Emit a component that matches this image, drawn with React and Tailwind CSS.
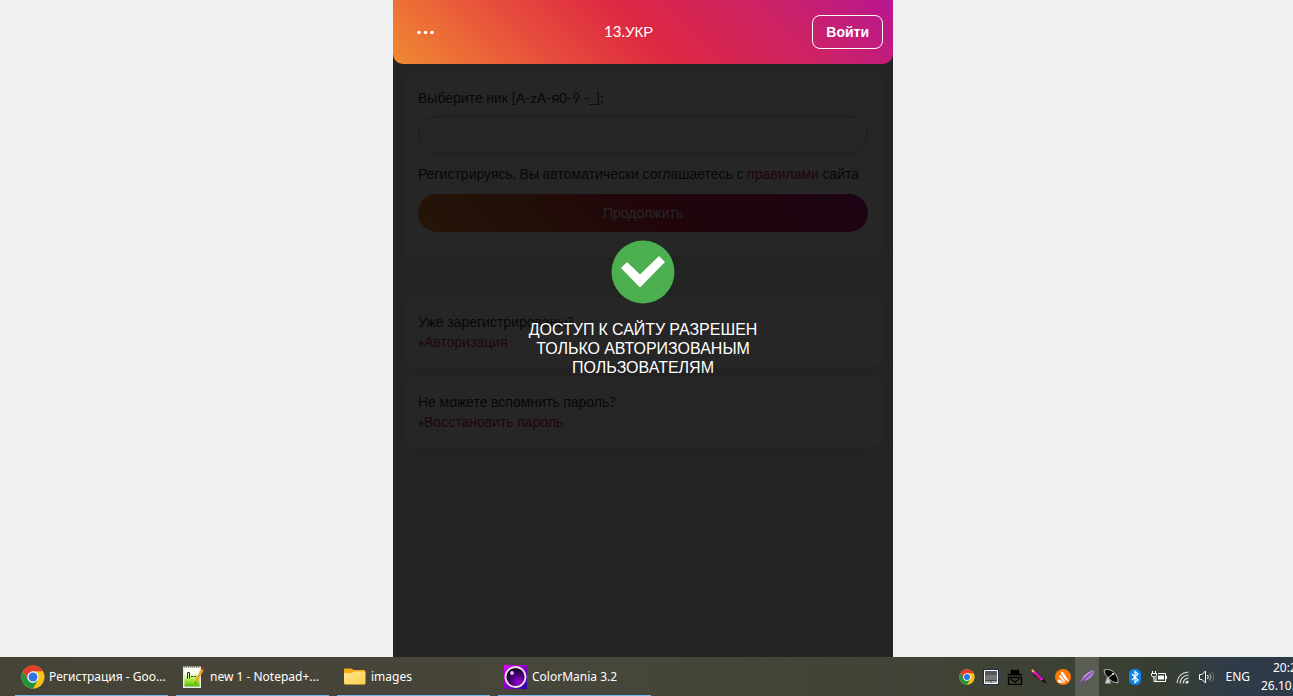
import React from "react";

const HEADER_GRADIENT =
  "bg-[linear-gradient(45deg,#f08a32_0%,#e74c3c_29%,#dc2743_51%,#cc2366_77%,#b81690_100%)]";
const BUTTON_GRADIENT =
  "bg-[linear-gradient(45deg,#f09433_0%,#e6683c_25%,#dc2743_50%,#cc2366_75%,#bc1888_100%)]";
const CARD = "rounded-[10px] bg-white p-[15px] shadow-[0_5px_20px_rgba(0,0,0,0.08)]";

/* Cyrillic words are set in the sans face, everything else keeps the page font. */
function Text({ children }) {
  return children
    .split(/([А-Яа-яЁё]+)/)
    .map((part, i) =>
      i % 2 ? (
        <span key={i} className="[font-family:'Liberation_Sans',sans-serif]">
          {part}
        </span>
      ) : (
        part
      )
    );
}

function ChromeIcon({ className }) {
  return (
    <svg className={className} viewBox="0 0 48 48" aria-hidden="true">
      <circle cx="24" cy="24" r="23" fill="#fbc116" />
      <path d="M24 24 4.1 12.5A23 23 0 0 1 43.9 12.5H24Z" fill="#e33b2e" />
      <path d="M4.1 12.5 14 29.8 24 24V12.5Z" fill="#e33b2e" />
      <path d="M4.1 12.5 14 29.8A11.5 11.5 0 0 0 24 35.5L34 29.8 24 47A23 23 0 0 1 4.1 12.5Z" fill="#229342" />
      <circle cx="24" cy="24" r="11.5" fill="#fff" />
      <circle cx="24" cy="24" r="9" fill="#2f74e8" />
    </svg>
  );
}

function NotepadIcon() {
  return (
    <svg className="h-6 w-6 shrink-0" viewBox="0 0 24 24" aria-hidden="true">
      <defs>
        <linearGradient id="np" x1="0" y1="0" x2="0" y2="1">
          <stop offset="0.3" stopColor="#fafff0" />
          <stop offset="0.65" stopColor="#a9ec36" />
          <stop offset="1" stopColor="#4eb70c" />
        </linearGradient>
      </defs>
      <path d="M1 1.5h18v21.5H1Z" fill="#e8e8e8" />
      <path d="M2.5 3h15v18.5h-15Z" fill="url(#np)" />
      <path d="M2 2h16" stroke="#777" strokeWidth="1.5" strokeDasharray="1 1" />
      <path d="M5.5 13.5v-6h2v6" fill="none" stroke="#26331a" />
      <path d="M9 11.5h2M12 11.5h2" stroke="#26331a" strokeWidth="1.2" />
      <path d="m19 4 2.5 1.2-6 11.3-2.5 2 .3-3.5Z" fill="#f5a623" />
      <path d="m19 4 1.2-2.7 2.3 1-1 2.9Z" fill="#9a3428" />
      <path d="m13 18.5.2-1.600 1.200.5Z" fill="#222" />
    </svg>
  );
}

function FolderIcon() {
  return (
    <svg className="h-6 w-6 shrink-0" viewBox="0 0 24 24" aria-hidden="true">
      <defs>
        <linearGradient id="fd" x1="0" y1="0" x2="1" y2="1">
          <stop offset="0" stopColor="#ffe694" />
          <stop offset="1" stopColor="#ffcf48" />
        </linearGradient>
      </defs>
      <path d="M1 4.5a1 1 0 0 1 1-1h6.5L10.5 5H21a1 1 0 0 1 1 1v6H1Z" fill="#f3ac16" />
      <path d="M1 8h8l2-1.5h11.5V18a1.5 1.5 0 0 1-1.5 1.5H2.5A1.5 1.5 0 0 1 1 18Z" fill="url(#fd)" />
    </svg>
  );
}

function ColorManiaIcon() {
  return (
    <svg className="h-6 w-6 shrink-0" viewBox="0 0 24 24" aria-hidden="true">
      <defs>
        <linearGradient id="cm1" x1="0" y1="0" x2="1" y2="1">
          <stop offset="0" stopColor="#e600ff" />
          <stop offset="0.5" stopColor="#8a00c8" />
          <stop offset="1" stopColor="#2500a8" />
        </linearGradient>
        <radialGradient id="cm2" cx="0.65" cy="0.75" r="0.7">
          <stop offset="0" stopColor="#a400df" />
          <stop offset="0.5" stopColor="#4d007c" />
          <stop offset="1" stopColor="#160022" />
        </radialGradient>
      </defs>
      <path d="M0 0h23v24H0Z" fill="url(#cm1)" />
      <circle cx="11.5" cy="12" r="10" fill="url(#cm2)" stroke="#e4e4dc" strokeWidth="1.8" />
      <circle cx="8" cy="8" r="2" fill="#d9b8e8" />
    </svg>
  );
}

function TaskButton({ icon, label }) {
  return (
    <button
      type="button"
      className="flex h-full w-[153px] items-center gap-1 border-b border-[#76b9ed] pt-0.5 pl-1.5 text-left"
    >
      {icon}
      <span className="whitespace-nowrap">{label}</span>
    </button>
  );
}

const trayIcons = [
  { name: "Chrome", art: <ChromeIcon className="h-4 w-4" /> },
  {
    name: "Window",
    art: (
      <svg className="h-4 w-4" viewBox="0 0 16 16">
        <path d="M1.5 1.5h13v13h-13Z" fill="#777" stroke="#fff" />
        <path d="M2 2h12v4H2Z" fill="#555" />
        <path d="M2 11h12v3H2Z" fill="#aaa" />
        <path d="M2 11.5h12M8 12v2" stroke="#444" />
        <path d="M.5.5h15v15H.5Z" fill="none" stroke="#1c2c45" />
      </svg>
    ),
  },
  {
    name: "Messenger",
    art: (
      <svg className="h-4 w-4" viewBox="0 0 16 16">
        <path d="M3.5 5V2.5Q4 .5 5.5.5 8 1.5 10.5.5q1.5 0 2 2V5h3v1.5H.5V5Z" fill="#000" />
        <path d="M1.5 8.5h13v7h-13Z" fill="none" stroke="#000" strokeWidth="1.3" />
        <path d="m3.5 10 4.5 3 4.5-3" fill="none" stroke="#000" strokeWidth="1.3" />
      </svg>
    ),
  },
  {
    name: "Color picker",
    art: (
      <svg className="h-4 w-4" viewBox="0 0 16 16">
        <path d="m1 1 4 1.5 8 7.5 3 4.5-5-2L3 6.5Z" fill="#111" />
        <path d="m2.5 2.5 9 8.5" stroke="#f010d0" strokeWidth="3" />
        <path d="m4 5 5 5" stroke="#e01020" strokeWidth="1.2" />
        <path d="m6.5 5 4 4" stroke="#2848ff" strokeWidth="1" />
        <path d="m.8.8 2 2" stroke="#f5e02a" strokeWidth="1.8" />
      </svg>
    ),
  },
  {
    name: "Avast",
    art: (
      <svg className="h-4 w-4" viewBox="0 0 16 16">
        <circle cx="8" cy="8" r="8" fill="#ff7800" />
        <path d="M6 3q.9-1.200 2 0l5.500 8.500q.2 1.200-1 .8L9.500 10 6 4.500Q5.500 3.700 6 3Z" fill="#fff" />
        <path d="M4.300 6.500q.9-.8 1.700 0l3.200 4.300 1.500 1.400-3.200-.5-3.200-3.600q-.6-.9 0-1.600Z" fill="#fff" />
        <path d="M3.300 10.800q.5-.7 1.300-.3l2.600 1.900 3 .4-.5.900H4q-1.200-.2-1.300-1.400Z" fill="#fff" />
      </svg>
    ),
  },
  {
    name: "Feather",
    active: true,
    art: (
      <svg className="h-4 w-4" viewBox="0 0 16 16">
        <path d="M15.5.5q-.5 6-4.500 9-3.500 2.500-7.500 2.500L1 15.500l-.5-.5L3 10q1.500-4 5.500-6Z" fill="#a77bd0" />
        <path d="M15 1Q9 6 1 15" fill="none" stroke="#5e2a91" />
        <path d="M14 1.5Q8 4 5 8" fill="none" stroke="#e0c8f2" strokeWidth=".8" />
      </svg>
    ),
  },
  {
    name: "Satellite",
    art: (
      <svg className="h-4 w-4" viewBox="0 0 16 16">
        <path d="m4 8-2 6.5h6l-1-3" fill="#bbb" />
        <path d="M1 1q7-2 11.5 4 3.500 5 2.500 9-5.500 0-10-5Q1 5 1 1Z" fill="#080808" stroke="#ddd" strokeWidth=".8" />
        <path d="m5 9 5-4M3.5 13.5l3-2.5" stroke="#eee" />
        <circle cx="10" cy="5" r="1" fill="#fff" />
      </svg>
    ),
  },
  {
    name: "Bluetooth",
    art: (
      <svg className="h-4 w-4" viewBox="0 0 16 16">
        <rect x="2" width="12" height="16" rx="5" fill="#0a84ea" />
        <path d="m5 5 6 6-3 2.500v-11L11 5l-6 6" fill="none" stroke="#fff" strokeWidth="1.2" />
      </svg>
    ),
  },
  {
    name: "Power",
    art: (
      <svg className="h-4 w-4" viewBox="0 0 16 16">
        <path d="M1.5 2v2M4.5 2v2M.5 4.5h5v2q0 1.500-2.500 1.500T.5 6.500ZM3 8v4.500h2" fill="none" stroke="#fff" />
        <path d="M7 4.5h7.5v8H5v-4" fill="none" stroke="#fff" />
        <path d="M7 6.5h6v4H7Z" fill="#fff" />
        <path d="M15.5 7v3" stroke="#fff" />
      </svg>
    ),
  },
  {
    name: "Network",
    art: (
      <svg className="h-4 w-4" viewBox="0 0 16 16" fill="none" stroke="#ddd" strokeWidth="1.2">
        <path d="M2 14Q3 4 13.5 3M5 14.5Q5.5 7 13.5 6M8 14.5Q8.5 10 13.5 9M10.5 14.5q0-2 3-2.500" />
        <circle cx="12.5" cy="13.5" r="1" fill="#fff" stroke="none" />
      </svg>
    ),
  },
  {
    name: "Volume",
    art: (
      <svg className="h-4 w-4" viewBox="0 0 16 16" fill="none" stroke="#fff">
        <path d="M.5 5.5H3L6.5 2v12L3 10.5H.5Z" />
        <path d="M8.5 6q1.5 2 0 4" />
        <path d="M10.5 4.5q3 3.5 0 7" stroke="#bbb" />
        <path d="M12.5 3q4.5 5 0 10" stroke="#777" />
      </svg>
    ),
  },
];

function Taskbar() {
  return (
    <footer className="flex h-[39px] shrink-0 items-center justify-between overflow-hidden bg-[linear-gradient(90deg,#464337_0%,#47463a_45%,#3f4336_75%,#373f32_90%,#303b48_95%,#2f3a49_100%)] [font-family:'Noto_Sans',sans-serif] text-xs text-white">
      <nav aria-label="Taskbar" className="flex h-full gap-2 pl-[15px]">
        <TaskButton icon={<ChromeIcon className="h-6 w-6 shrink-0" />} label="Регистрация - Goo..." />
        <TaskButton icon={<NotepadIcon />} label="new 1 - Notepad+..." />
        <TaskButton icon={<FolderIcon />} label="images" />
        <TaskButton icon={<ColorManiaIcon />} label="ColorMania 3.2" />
      </nav>
      <div className="flex h-full items-center">
        {trayIcons.map((t) => (
          <button
            key={t.name}
            type="button"
            aria-label={t.name}
            className={`flex h-full w-6 items-center justify-center ${t.active ? "bg-[#5a5d53]" : ""}`}
          >
            {t.art}
          </button>
        ))}
        <button type="button" className="pl-1.5">
          ENG
        </button>
        <div className="ml-[11px] w-8 overflow-hidden whitespace-nowrap">
          <p className="pl-3 leading-[18px]">20:2</p>
          <p className="leading-[18px]">26.10.2</p>
        </div>
      </div>
    </footer>
  );
}

export default function App() {
  return (
    <div className="flex h-screen flex-col overflow-hidden bg-[#f0f0f0]">
      <main className="flex min-h-0 flex-1 justify-center pr-[7px] [font-family:Lato,'Liberation_Sans',sans-serif] text-sm text-[#333]">
        <div className="relative w-full max-w-[500px] overflow-hidden">
          <header
            className={`relative z-20 grid h-16 grid-cols-[40px_1fr_auto] items-center rounded-b-[10px] pr-[10px] pl-3 text-white ${HEADER_GRADIENT}`}
          >
            <button type="button" aria-label="Меню" className="flex h-8 w-10 items-center justify-center">
              <svg className="h-4 w-5" viewBox="0 0 20 16" fill="#fff" aria-hidden="true">
                <circle cx="4" cy="8.5" r="1.8" />
                <circle cx="10.5" cy="8.5" r="1.8" />
                <circle cx="17" cy="8.5" r="1.8" />
              </svg>
            </button>
            <h1 className="text-center text-[15px]">
              <Text>13.УКР</Text>
            </h1>
            <a
              href="#login"
              className="rounded-lg border border-white px-[13px] py-1.5 leading-5 font-bold"
            >
              <Text>Войти</Text>
            </a>
          </header>

          <form className={`mx-[10px] mt-[9px] pb-[25px]! ${CARD}`}>
            <label htmlFor="nick" className="block h-5 leading-5">
              <Text>Выберите ник [A-zA-я0-9 -_]:</Text>
            </label>
            <input
              id="nick"
              type="text"
              className="mt-2 block h-[38px] w-full rounded-full border border-[#dc2743]/40 bg-transparent px-4 outline-none"
            />
            <p className="mt-[10px] h-5 leading-5">
              <Text>Регистрируясь, Вы автоматически соглашаетесь с </Text>
              <a href="#rules" className="text-[#dc2743]">
                <Text>правилами</Text>
              </a>
              <Text> сайта</Text>
            </p>
            <button type="submit" className={`mt-[10px] block h-[38px] w-full rounded-full text-white ${BUTTON_GRADIENT}`}>
              <Text>Продолжить</Text>
            </button>
          </form>

          <section className={`mx-[10px] mt-10 leading-5 ${CARD}`}>
            <p className="h-5">
              <Text>Уже зарегистрированы?</Text>
            </p>
            <p className="h-5">
              »
              <a href="#auth" className="text-[#dc2743]">
                <Text>Авторизация</Text>
              </a>
            </p>
          </section>

          <section className={`mx-[10px] mt-[10px] leading-5 ${CARD}`}>
            <p className="h-5">
              <Text>Не можете вспомнить пароль?</Text>
            </p>
            <p className="h-5">
              »
              <a href="#restore" className="text-[#dc2743]">
                <Text>Восстановить пароль</Text>
              </a>
            </p>
          </section>

          <div
            role="alert"
            className="absolute inset-0 z-10 flex flex-col items-center bg-black/85 pt-60 text-white"
          >
            <svg className="h-16 w-16" viewBox="0 0 64 64" aria-hidden="true">
              <circle cx="32" cy="32" r="31.5" fill="#4caf50" />
              <path d="m10 28 6-6 13 12.5L48 16l6 6-25 25.500Z" fill="#fff" />
            </svg>
            <p className="mt-4 w-60 text-center text-base leading-[18px]">
              <Text>ДОСТУП К САЙТУ РАЗРЕШЕН ТОЛЬКО АВТОРИЗОВАНЫМ ПОЛЬЗОВАТЕЛЯМ</Text>
            </p>
          </div>
        </div>
      </main>
      <Taskbar />
    </div>
  );
}
